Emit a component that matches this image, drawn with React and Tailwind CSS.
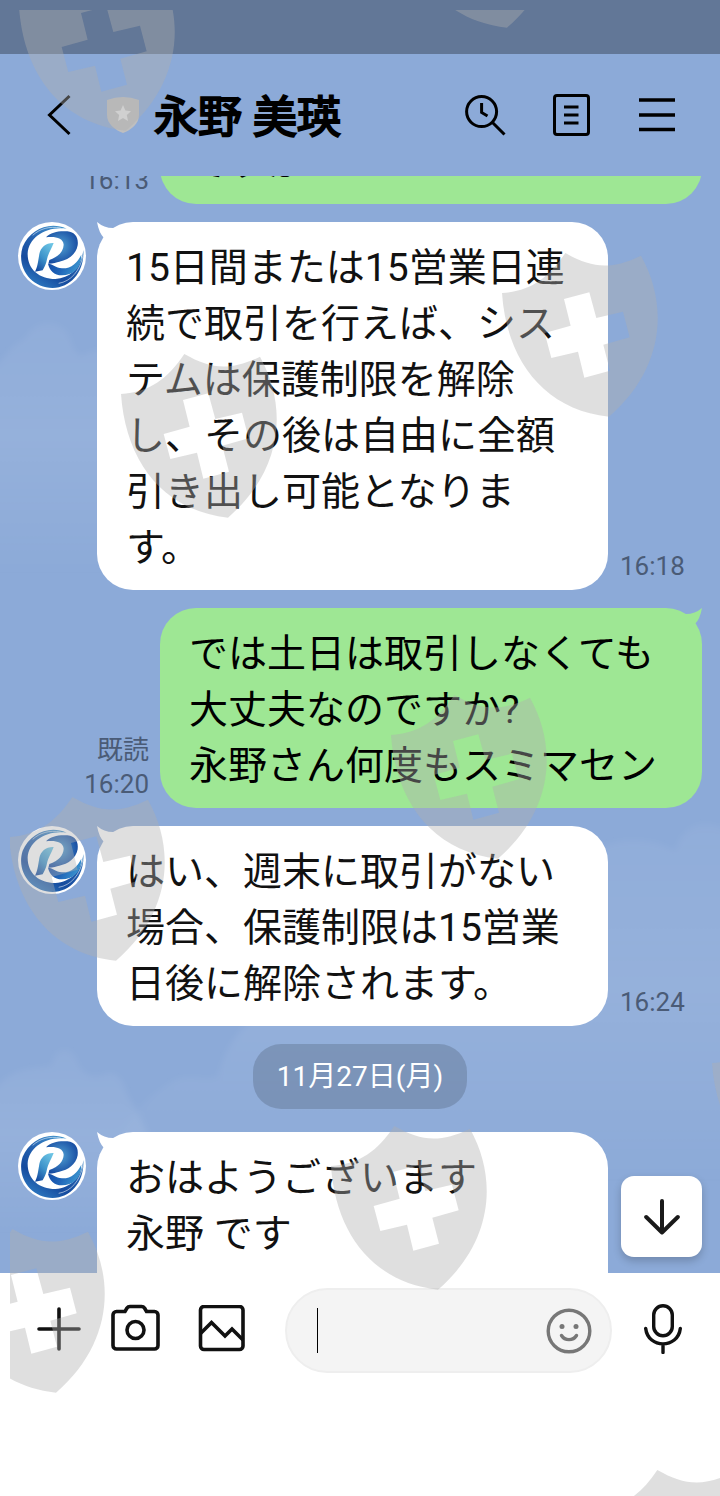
import React from "react";

const MARKS = [
  [19, -33],
  [400, -136],
  [502, 253],
  [121, 354],
  [391, 695],
  [9, 797],
  [712, 1023],
  [331, 1126],
  [-51, 1229],
  [594, 1470],
];

function Watermarks() {
  return (
    <div className="pointer-events-none absolute inset-0 pt-[10px] pl-[10px]" aria-hidden="true">
      <svg className="h-full w-full overflow-hidden">
        <defs>
          <path
            id="shield"
            fillRule="evenodd"
            d="M0 120C85 115 140 75 190 0C270 45 325 52 417 8C502 160 485 350 321 491C126 470 14 322 0 120ZM186 138L206 218L128 240L148 315L228 296L247 374L324 353L304 275L383 253L363 176L283 195L262 118Z"
          />
        </defs>
        <g fill="#afafaf" fillOpacity="0.4">
          {MARKS.map(([x, y]) => (
            <use key={`${x},${y}`} href="#shield" transform={`translate(${x - 10} ${y - 10}) scale(0.3333)`} />
          ))}
        </g>
      </svg>
    </div>
  );
}

function Clouds() {
  return (
    <svg className="absolute inset-0 h-full w-full" viewBox="0 0 720 1097" preserveAspectRatio="xMidYMin slice" aria-hidden="true">
      <defs>
        <linearGradient id="cloud" x1="0" y1="0" x2="0" y2="1">
          <stop offset="0" stopColor="#fff" stopOpacity="0.04" />
          <stop offset="0.45" stopColor="#fff" stopOpacity="0.08" />
          <stop offset="1" stopColor="#fff" stopOpacity="0" />
        </linearGradient>
        <filter id="soft">
          <feGaussianBlur stdDeviation="3" />
        </filter>
      </defs>
      <g fill="url(#cloud)" filter="url(#soft)">
        <path d="M-10 194C6 186 10 168 24 164C32 148 50 142 62 152C74 158 68 176 82 180C92 172 104 176 120 172V400H-10Z" />
        <path d="M-10 920C10 890 30 894 52 890C54 872 68 868 76 882C80 900 94 904 106 898C124 892 124 920 134 930C150 960 170 1000 180 1060H-10Z" />
        <path d="M100 1010C120 940 150 920 175 904C190 898 210 906 218 900C224 880 230 866 245 850C340 800 500 690 600 672C620 662 650 660 676 676C680 650 704 640 730 656V1010Z" />
      </g>
    </svg>
  );
}

function Avatar() {
  return (
    <svg className="size-[68px] shrink-0" viewBox="0 0 204 204" role="img" aria-label="R">
      <defs>
        <linearGradient id="ring" x1="0.9" y1="0" x2="0.3" y2="1">
          <stop offset="0" stopColor="#4aa5d8" />
          <stop offset="0.45" stopColor="#2562b0" />
          <stop offset="0.75" stopColor="#164b9e" />
          <stop offset="1" stopColor="#2d78c0" />
        </linearGradient>
        <radialGradient id="bowl" cx="0.45" cy="0.45" r="0.6">
          <stop offset="0" stopColor="#4f9fd2" />
          <stop offset="1" stopColor="#1649a0" />
        </radialGradient>
        <linearGradient id="stem" x1="0.8" y1="0" x2="0.2" y2="1">
          <stop offset="0" stopColor="#6cc4e4" />
          <stop offset="0.55" stopColor="#3c92ca" />
          <stop offset="1" stopColor="#14499f" />
        </linearGradient>
        <linearGradient id="leg" x1="0" y1="0.2" x2="1" y2="0.5">
          <stop offset="0" stopColor="#1247a4" />
          <stop offset="0.5" stopColor="#2065b8" />
          <stop offset="1" stopColor="#3c97d0" />
        </linearGradient>
      </defs>
      <circle cx="102" cy="102" r="102" fill="#fff" />
      <path fill="url(#ring)" d="M146 20C92 -4 36 24 14 74C-6 138 40 197 104 198C160 196 200 148 196 84C190 136 158 168 112 171C64 171 28 142 29 94C32 48 82 12 146 20Z" />
      <path fill="none" stroke="#fff" strokeWidth="2" strokeOpacity="0.8" d="M44 40C66 20 94 12 128 18M122 184C158 178 186 148 195 100" />
      <path fill="url(#bowl)" d="M84 46C98 30 124 26 148 28C172 30 182 48 179 70C174 98 150 114 124 119C116 121 106 124 91 125L94 114C122 104 136 88 137 68C136 46 108 42 84 46Z" />
      <path fill="url(#stem)" d="M107 63C84 62 68 76 64 96C60 122 58 136 51 149L74 145C80 134 84 128 87 112C90 96 99 84 107 63Z" />
      <path fill="url(#leg)" d="M90 125C106 125 112 138 132 139C160 140 178 122 190 98C190 138 164 160 132 160C108 160 94 144 90 125Z" />
    </svg>
  );
}

function Tail({ sent }) {
  return (
    <svg
      className={sent ? "absolute top-0 right-0 size-5 -scale-x-100 text-[#9ee794]" : "absolute top-0 left-0 size-5 text-white"}
      viewBox="0 0 20 20"
      aria-hidden="true"
    >
      <path fill="currentColor" d="M0 0Q7 6 16 6L20 10L12 20L7 16Q2 11 0 0Z" />
    </svg>
  );
}

function Received({ time, children }) {
  return (
    <li className="flex items-end">
      <div className="mr-[11px] self-start">
        <Avatar />
      </div>
      <p className="relative w-full max-w-[511px] rounded-[36px] bg-white px-[29px] pt-[18px] pb-[14px] text-[39px] leading-[56px] whitespace-pre-line text-[#111]">
        <Tail />
        {children}
      </p>
      {time && <time className="mb-[7px] ml-3 shrink-0 text-[26px] leading-[34px] text-[#4a5b76]">{time}</time>}
    </li>
  );
}

function Sent({ time, read, children }) {
  return (
    <li className="flex items-end justify-end">
      <div className="mr-[11px] mb-[7px] flex shrink-0 flex-col items-end text-[26px] leading-[34px] text-[#4a5b76]">
        {read && <span>{read}</span>}
        <time>{time}</time>
      </div>
      <p className="relative w-full max-w-[542px] rounded-[36px] bg-[#9ee794] px-[29px] pt-[18px] pb-[14px] text-[39px] leading-[56px] whitespace-pre-line text-black">
        <Tail sent />
        {children}
      </p>
    </li>
  );
}

function Header() {
  return (
    <header className="flex h-[122px] items-center bg-[#8caad8] pr-[45px] pl-[47px]">
      <button type="button" aria-label="戻る" className="mr-9">
        <svg className="h-[42px] w-6" viewBox="0 0 24 42" fill="none" stroke="#000" strokeWidth="3">
          <path d="M22.500 2L2.500 21L22.500 40" />
        </svg>
      </button>
      <svg className="mr-[15px] h-9 w-8 shrink-0" viewBox="0 0 32 36" aria-hidden="true">
        <path fill="#bfbfbf" d="M0 3Q16-3 32 3V18C32 27 24 33 16 36C8 33 0 27 0 18Z" />
        <path fill="#e6e6e6" d="M16 8L18.400 13.600L24 14.200L19.800 18L21 24L16 21L11 24L12.200 18L8 14.200L13.600 13.600Z" />
      </svg>
      <h1 className="pt-1.5 text-[44px] leading-[60px] font-normal whitespace-nowrap text-black [-webkit-text-stroke:2px_#000]">永野 美瑛</h1>
      <div className="ml-auto flex items-center">
        <button type="button" aria-label="検索" className="mr-[46px]">
          <svg className="size-[42px]" viewBox="0 0 42 42" fill="none" stroke="#000" strokeWidth="3">
            <circle cx="16.600" cy="17.600" r="15" />
            <path d="M27.500 28.500L39.500 40.500M16.600 9V18.500L22.500 22" />
          </svg>
        </button>
        <button type="button" aria-label="ノート" className="mr-12">
          <svg className="h-[42px] w-[38px]" viewBox="0 0 38 42" fill="none" stroke="#000" strokeWidth="3">
            <rect x="1.500" y="1.500" width="34" height="39" rx="2.500" />
            <path d="M11 13H25.500M11 21H25.500M11 29H25.500" />
          </svg>
        </button>
        <button type="button" aria-label="メニュー">
          <svg className="h-[42px] w-9" viewBox="0 0 36 42" fill="none" stroke="#000" strokeWidth="3.500">
            <path d="M0 6H36M0 21H36M0 35.500H36" />
          </svg>
        </button>
      </div>
    </header>
  );
}

function Composer() {
  return (
    <form className="flex items-center bg-white pt-[15px] pr-[38px] pl-[37px]" onSubmit={(e) => e.preventDefault()}>
      <button type="button" aria-label="追加" className="mr-[30px] mb-1">
        <svg className="size-11" viewBox="0 0 44 44" fill="none" stroke="#111" strokeWidth="3.600" strokeLinecap="round">
          <path d="M22 2V42M2 22H42" />
        </svg>
      </button>
      <button type="button" aria-label="カメラ" className="mr-[37px] mb-1">
        <svg className="size-[50px]" viewBox="0 0 50 50" fill="none" stroke="#111" strokeWidth="3.600">
          <path d="M2 11A3.500 3.500 0 0 1 5.500 7.500H14L16 4Q17 2.500 19 2.500H30.500Q32.500 2.500 33.500 4L35.500 7.500H43.500A3.500 3.500 0 0 1 47 11V41.500A3.500 3.500 0 0 1 43.500 45H5.500A3.500 3.500 0 0 1 2 41.500Z" />
          <circle cx="24.500" cy="26" r="8.500" />
        </svg>
      </button>
      <button type="button" aria-label="写真" className="mr-[39px] mb-1">
        <svg className="size-12" viewBox="0 0 48 48" fill="none" stroke="#111" strokeWidth="3.600">
          <rect x="2.500" y="1.500" width="42.500" height="43" rx="3.500" />
          <path d="M2.500 28.500L13.500 17.500L27 31L34 24L45 35" />
        </svg>
      </button>
      <div className="flex h-[85px] min-w-0 flex-1 items-center rounded-full border-2 border-[#eee] bg-[#f4f4f4] pr-[18px] pl-[30px]">
        <span className="h-[45px] w-px shrink-0 bg-black" />
        <input
          type="text"
          aria-label="メッセージ"
          className="h-14 min-w-0 flex-1 bg-transparent px-2 text-[39px] text-[#111] caret-transparent outline-none"
        />
        <button type="button" aria-label="絵文字" className="shrink-0">
          <svg className="size-[46px]" viewBox="0 0 46 46" fill="none" stroke="#777" strokeWidth="3.400" strokeLinecap="round">
            <circle cx="23" cy="23" r="20.800" />
            <path d="M15.500 27.500C19 33 27 33 30.500 27.500" />
            <circle cx="16" cy="18.500" r="2.500" fill="#777" stroke="none" />
            <circle cx="30" cy="18.500" r="2.500" fill="#777" stroke="none" />
          </svg>
        </button>
      </div>
      <button type="button" aria-label="音声" className="mb-1 ml-8">
        <svg className="h-[50px] w-[38px]" viewBox="0 0 38 50" fill="none" stroke="#111" strokeWidth="3.400" strokeLinecap="round">
          <rect x="9.700" y="1.700" width="18.600" height="30" rx="9.300" />
          <path d="M1.700 24.500C4 45 34 45 36.300 24.500M19 41V48.500" />
        </svg>
      </button>
    </form>
  );
}

export default function App() {
  return (
    <div className="relative flex h-screen flex-col overflow-hidden bg-white font-[Roboto,'Noto_Sans_CJK_JP',sans-serif]" lang="ja">
      <div className="h-[54px] shrink-0 bg-[#627797]" />
      <Header />
      <main className="relative min-h-0 flex-1 overflow-hidden bg-[#8caad8]">
        <Clouds />
        <ul className="relative -mt-[60px] flex flex-col gap-[18px] px-[18px]">
          <Sent time="16:13">ですか</Sent>
          <Received time="16:18">
            15日間または15営業日連続で取引を行えば、システムは保護制限を解除し、その後は自由に全額引き出し可能となります。
          </Received>
          <Sent time="16:20" read="既読">
            {"では土日は取引しなくても大丈夫なのですか?\n永野さん何度もスミマセン"}
          </Sent>
          <Received time="16:24">はい、週末に取引がない場合、保護制限は15営業日後に解除されます。</Received>
          <li className="mb-[5px] self-center rounded-[28px] bg-black/15 px-6 py-3 text-[28px] leading-[41px] text-white">
            11月27日(月)
          </li>
          <Received>{"おはようございます\n永野 です\n\n\n"}</Received>
        </ul>
        <button
          type="button"
          aria-label="最新のメッセージへ"
          className="absolute right-[18px] bottom-4 flex size-[81px] items-center justify-center rounded-[13px] bg-white shadow-[0_4px_8px_rgba(0,0,0,0.2)]"
        >
          <svg className="size-9" viewBox="0 0 36 36" fill="none" stroke="#1a1a1a" strokeWidth="4" strokeLinecap="round" strokeLinejoin="round">
            <path d="M18 2V33.500M2.200 18L18 33.500L33.800 18" />
          </svg>
        </button>
      </main>
      <footer className="shrink-0 bg-white pb-[123px]">
        <Composer />
      </footer>
      <Watermarks />
    </div>
  );
}
